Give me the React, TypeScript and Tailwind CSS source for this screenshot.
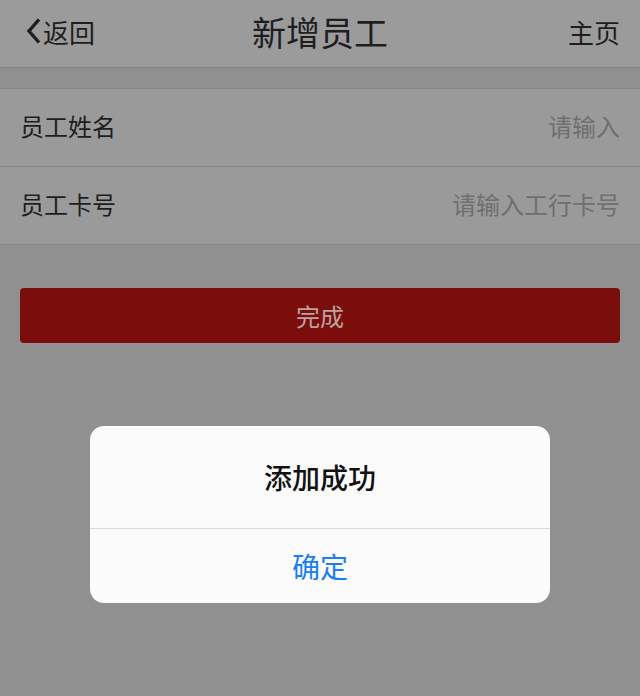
import React from 'react';

const font = { fontFamily: '"Noto Sans CJK SC", "Noto Sans", sans-serif' };

function Row({ label, placeholder }: { label: string; placeholder: string }) {
  return (
    <div className="flex h-[78px] items-center justify-between border-b border-[#868686] bg-[#9a9a9a] px-5 pb-[3px]">
      <span className="text-[24px] text-[#1e1e1e]">{label}</span>
      <span className="text-[24px] text-[#6f6f6f]">{placeholder}</span>
    </div>
  );
}

export default function App() {
  return (
    <div className="relative h-[696px] w-[640px] overflow-hidden bg-[#909090]" style={font}>
      {/* Nav bar */}
      <div className="flex h-[68px] items-center justify-between border-b border-[#858585] bg-[#9b9b9b] px-5 pb-[5px]">
        <div className="flex w-[120px] items-center text-[26px] text-[#1e1e1e]">
          <svg width="16" height="26" viewBox="0 0 16 26" className="ml-[6px] mr-[1px]">
            <path d="M13 1.5 L3 13 L13 24.5" fill="none" stroke="#1e1e1e" strokeWidth="3.4" strokeLinejoin="miter" />
          </svg>
          <span>返回</span>
        </div>
        <div className="text-[34px] text-[#1e1e1e]">新增员工</div>
        <div className="flex w-[120px] justify-end text-[26px] text-[#1e1e1e]">主页</div>
      </div>

      {/* Form */}
      <div className="mt-[20px] border-t border-[#868686]">
        <Row label="员工姓名" placeholder="请输入" />
        <Row label="员工卡号" placeholder="请输入工行卡号" />
      </div>

      <div className="px-5 pt-[43px]">
        <div className="flex h-[55px] items-center justify-center rounded-[4px] bg-[#7b0e0b] text-[24px] text-[#b8a3a1]">
          完成
        </div>
      </div>

      {/* Alert */}
      <div className="absolute left-[90px] top-[426px] w-[460px] overflow-hidden rounded-[14px] bg-[#fbfbfb]">
        <div className="flex h-[103px] items-center justify-center border-b border-[#dcdcdc] text-[28px] font-medium text-[#111]">
          添加成功
        </div>
        <div className="flex h-[74px] items-center justify-center text-[28px] text-[#1a7ff0]">确定</div>
      </div>
    </div>
  );
}
